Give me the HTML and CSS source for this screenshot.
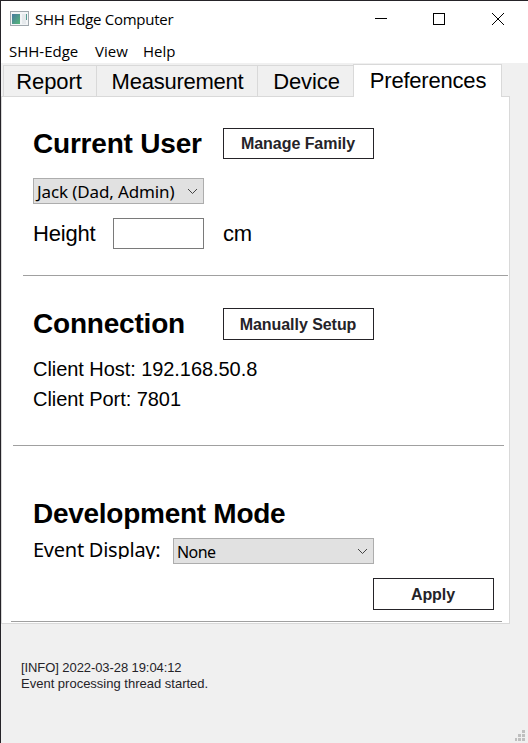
FILE: index.html
```html
<!DOCTYPE html>
<html lang="en">
<head>
<meta charset="utf-8">
<title>SHH Edge Computer</title>
<link rel="stylesheet" href="styles.css">
</head>
<body>
<div class="window">
  <header class="titlebar">
    <svg class="app-icon" width="19" height="16" viewBox="0 0 19 16">
      <defs><linearGradient id="screen" x1="0" y1="0" x2="1" y2="1"><stop offset="0" stop-color="#4879a0"/><stop offset="1" stop-color="#55b878"/></linearGradient></defs>
      <rect x=".5" y=".5" width="18" height="14" fill="#f3f5f7" stroke="#a0a8ae"/>
      <rect x="2" y="3" width="8" height="10" fill="url(#screen)"/>
      <rect x="12" y="3" width="4" height="10" fill="#e5e9ec"/>
      <rect x="16" y="3" width="1" height="6" fill="#559b91"/>
    </svg>
    <span class="title">SHH Edge Computer</span>
    <svg class="controls" width="130" height="14" viewBox="0 0 130 14" fill="none" stroke="#000">
      <path d="M1 6.500h12M59.500 1.500h11v11h-11z" shape-rendering="crispEdges"/>
      <path d="M118 1l12 12M130 1l-12 12"/>
    </svg>
  </header>
  <nav class="menubar"><span class="m1">SHH-Edge</span><span class="m2">View</span><span class="m3">Help</span></nav>
  <div class="tabs">
    <div class="tab report"><span>Report</span></div>
    <div class="tab measurement"><span>Measurement</span></div>
    <div class="tab device"><span>Device</span></div>
    <div class="tab active"><span>Preferences</span></div>
  </div>
  <main class="pane">
    <section class="user">
      <div class="row head"><h2>Current User</h2><button class="btn">Manage Family</button></div>
      <div class="select person"><span>Jack (Dad, Admin)</span><svg width="11" height="7" viewBox="0 0 11 7"><path d="M1 1l4.500 4.500L10 1"/></svg></div>
      <div class="row height"><label for="height">Height</label><input id="height" type="text"><span>cm</span></div>
    </section>
    <section class="connection">
      <div class="row head"><h2>Connection</h2><button class="btn tall">Manually Setup</button></div>
      <p>Client Host: 192.168.50.8</p>
      <p>Client Port: 7801</p>
    </section>
    <section class="development">
      <h2 class="dev-title">Development Mode</h2>
      <div class="row event"><span class="event-label">Event Display:</span><div class="select"><span>None</span><svg width="11" height="7" viewBox="0 0 11 7"><path d="M1 1l4.500 4.500L10 1"/></svg></div></div>
      <button class="btn tall apply">Apply</button>
    </section>
  </main>
  <footer class="status">
    <div><span class="stamp">[INFO] 2022-03-28 19:04:12</span><br>Event processing thread started.</div>
    <svg width="11" height="12" viewBox="0 0 11 12" fill="#bfbfbf" shape-rendering="crispEdges"><path d="M7 0h3v3h-3zM3 4h3v3h-3zM7 4h3v3h-3zM0 8h2v3h-2zM3 8h3v3h-3zM7 8h3v3h-3z"/></svg>
  </footer>
</div>
</body>
</html>
```
FILE: styles.css
```css
* { box-sizing: border-box; }
body { margin: 0; font-family: "Liberation Sans", Arial, sans-serif; color: #000; }
.window { width: 528px; height: 743px; background: #f0f0f0; border: solid #252328; border-width: 1px 0 0 1px; display: flex; flex-direction: column; overflow: hidden; white-space: nowrap; }
.titlebar { height: 37px; background: #fff; display: flex; align-items: center; padding: 0 24px 0 9px; }
.title { font: 15px/20px "Open Sans", sans-serif; margin: 0 0 2px 6px; letter-spacing: -.27px; }
.app-icon { margin-bottom: 1px; }
.controls { margin: 0 0 1px auto; }
.menubar { height: 25px; background: #fff; display: flex; padding-left: 8px; font: 15px/27px "Open Sans", sans-serif; }
.m1 { width: 86px; }
.m2 { width: 48px; }
.tabs { height: 33px; display: flex; align-items: flex-end; padding-left: 2px; }
.tab { height: 31px; border: solid #d9d9d9; border-width: 1px 1px 0 0; font-size: 22px; line-height: 31px; text-align: center; letter-spacing: -.1px; }
.report { width: 94px; border-left-width: 1px; padding-right: 2px; }
.measurement { width: 161px; padding-left: 1px; letter-spacing: -.25px; }
.device { width: 95px; border-right: 0; padding-left: 2px; }
.active { width: 149px; height: 33px; border-left-width: 1px; background: #fff; margin-bottom: -1px; position: relative; line-height: 32px; padding-left: 1px; letter-spacing: -.2px; }
.pane { width: 509px; height: 528px; background: #fff; border: 1px solid #d9d9d9; }
.row { display: flex; }
h2 { margin: 0; font-size: 28px; line-height: 32px; letter-spacing: -.2px; }
.dev-title { letter-spacing: -.27px; }
.head h2 { width: 190px; }
.btn { width: 151px; height: 31px; padding: 0 1px 0 0; border: 1px solid #252328; background: #fff; color: #252328; font: bold 16px/29px "Liberation Sans", Arial, sans-serif; letter-spacing: -.05px; }
.btn.tall { height: 32px; }
.user { height: 179px; padding-top: 31px; border-bottom: 1px solid #a0a0a0; margin: 0 1px 0 21px; padding-left: 10px; }
.user .head { height: 50px; }
.select { height: 26px; border: 1px solid #adadad; background: #e1e1e1; display: flex; align-items: center; justify-content: space-between; padding: 0 5px 0 3px; font: 16px/26px "Noto Sans", sans-serif; letter-spacing: -.6px; }
.select span { padding-top: 2px; }
.select svg { fill: none; stroke: #444; margin-top: 1px; }
.person { width: 171px; font-size: 17px; letter-spacing: -.12px; }
.height { margin-top: 14px; line-height: 31px; font-size: 22px; letter-spacing: -.2px; }
.height label { width: 80px; }
.height input { width: 91px; height: 31px; border: 1px solid #7a7a7a; padding: 0 4px; margin: 0 19px 0 0; font: inherit; background: #fff; }
.connection { height: 170px; padding-top: 32px; border-bottom: 1px solid #a0a0a0; margin: 0 5px 0 11px; padding-left: 20px; }
.connection .head { height: 46px; }
p { margin: 0; font-size: 20px; line-height: 30px; letter-spacing: -.06px; }
.development { height: 176px; padding-top: 52px; border-bottom: 1px solid #a0a0a0; margin: 0 7px 0 9px; padding-left: 22px; display: flex; flex-direction: column; }
.event { margin-top: 8px; }
.event-label { width: 140px; height: 21px; overflow: hidden; font: 20px/24px "Noto Sans", sans-serif; letter-spacing: -.25px; }
.event .select { width: 201px; }
.apply { width: 121px; margin: 14px 8px 0 auto; }
.status { flex: 1; padding: 36px 2px 1px 20px; color: #252328; font-size: 13px; line-height: 16px; display: flex; justify-content: space-between; }
.stamp { letter-spacing: -.08px; }
.status svg { align-self: flex-end; }
```
